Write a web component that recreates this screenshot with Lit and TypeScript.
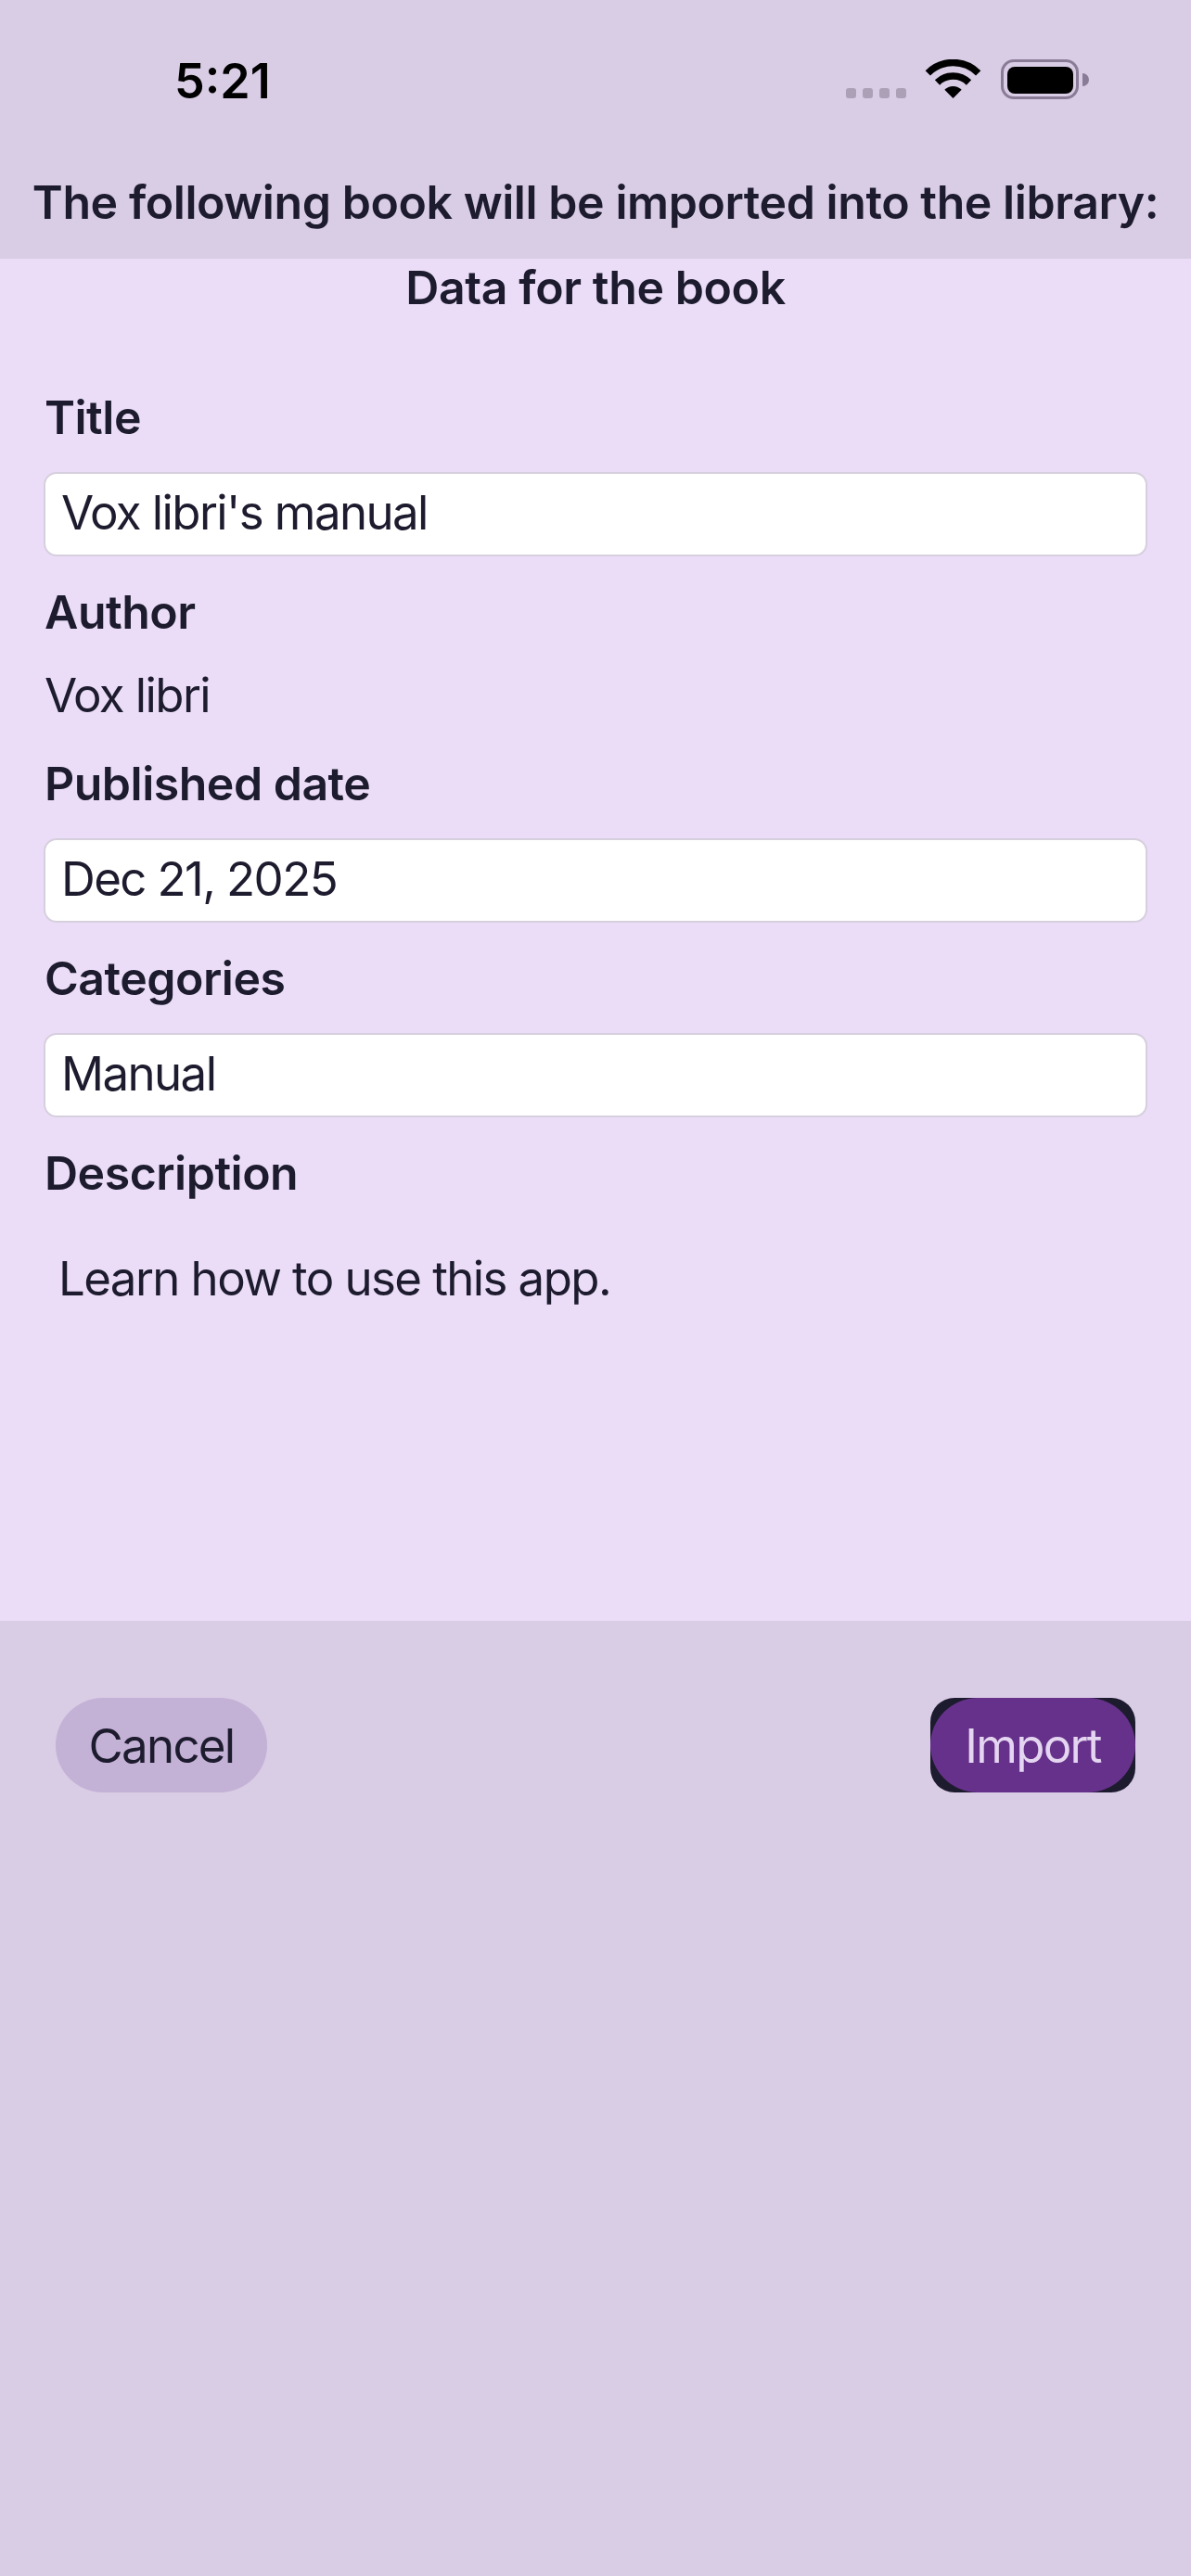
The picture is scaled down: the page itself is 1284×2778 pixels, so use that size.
import { LitElement, html, css } from "lit";
import { customElement } from "lit/decorators.js";

@customElement("app-root")
export class AppRoot extends LitElement {
  static styles = css`
    :host {
      display: flex;
      flex-direction: column;
      min-height: 2778px;
      background: #d9cce5;
      color: #1d1b2e;
      font-family: Inter, "Noto Sans", sans-serif;
      font-size: 51px;
    }
    .top { height: 279px; display: flex; flex-direction: column; }
    .status { height: 187px; flex: none; display: flex; align-items: flex-start; justify-content: space-between; padding: 0 110px 0 188px; }
    .time { font-weight: 600; font-size: 52px; line-height: 63px; margin-top: 56px; color: #000; }
    .status svg { margin-top: 64px; display: block; }
    .heading { margin: 0; text-align: center; font-weight: 600; font-size: 50px; line-height: 62px; white-space: nowrap; letter-spacing: -0.43px; }
    .content { height: 1469px; background: #ebddf7; padding: 0 47px; box-sizing: border-box; }
    .sub { margin: 0 -47px 49px; text-align: center; font-weight: 600; font-size: 50px; line-height: 62px; letter-spacing: -0.4px; }
    .label { font-weight: 600; font-size: 50px; line-height: 120px; height: 119px; padding-left: 1px; letter-spacing: -0.5px; }
    .input { height: 91px; box-sizing: border-box; background: #fff; border: 2px solid #d6cfdd; border-radius: 14px; padding-left: 17px; line-height: 84px; font-size: 51px; letter-spacing: -1.6px; }
    .value { height: 66px; line-height: 61px; font-size: 51px; padding-left: 1px; letter-spacing: -1.6px; }
    .desc { padding: 23px 16px 0; line-height: 64px; font-size: 51px; letter-spacing: -1.6px; }
    .foot { flex: 1; display: flex; justify-content: space-between; align-items: flex-start; padding: 83px 60px 0 60px; }
    .btn { height: 102px; display: flex; align-items: center; justify-content: center; font-size: 51px; letter-spacing: -1.7px; box-sizing: border-box; }
    .cancel { width: 228px; border-radius: 51px; background: #c4b1d6; color: #1d1b2e; }
    .import-wrap { width: 221px; height: 102px; border-radius: 26px; background: #1d1b2e; }
    .import { width: 221px; border-radius: 51px; background: #66318a; color: #e4d5f1; }
  `;

  render() {
    return html`
      <div class="top">
        <div class="status">
          <div class="time">5:21</div>
          <svg width="262" height="44" viewBox="0 0 262 44">
            <g fill="#aca0b7">
              <rect x="0" y="31" width="11" height="11" rx="3"/>
              <rect x="18" y="31" width="11" height="11" rx="3"/>
              <rect x="36" y="31" width="11" height="11" rx="3"/>
              <rect x="54" y="31" width="11" height="11" rx="3"/>
            </g>
            <g transform="translate(87 0)">
              <path d="M1.3 14.8A38.5 38.5 0 0 1 55.7 14.8" fill="none" stroke="#000" stroke-width="7.5"/>
              <path d="M11.5 25A24 24 0 0 1 45.5 25" fill="none" stroke="#000" stroke-width="7.5"/>
              <path d="M28.5 42L19.3 32.8A13 13 0 0 1 37.7 32.8Z" fill="#000"/>
            </g>
            <rect x="168.5" y="1.5" width="81" height="40" rx="12.5" fill="none" stroke="#8a7c97" stroke-width="3"/>
            <rect x="174" y="8" width="71" height="29" rx="8" fill="#000"/>
            <path d="M255 15a7 7 0 0 1 0 14z" fill="#8a7c97"/>
          </svg>
        </div>
        <h1 class="heading">The following book will be imported into the library:</h1>
      </div>
      <div class="content">
        <h2 class="sub">Data for the book</h2>
        <div class="label">Title</div>
        <div class="input">Vox libri's manual</div>
        <div class="label">Author</div>
        <div class="value">Vox libri</div>
        <div class="label">Published date</div>
        <div class="input">Dec 21, 2025</div>
        <div class="label">Categories</div>
        <div class="input">Manual</div>
        <div class="label">Description</div>
        <div class="desc">Learn how to use this app.</div>
      </div>
      <div class="foot">
        <div class="btn cancel">Cancel</div>
        <div class="import-wrap"><div class="btn import">Import</div></div>
      </div>
    `;
  }
}
